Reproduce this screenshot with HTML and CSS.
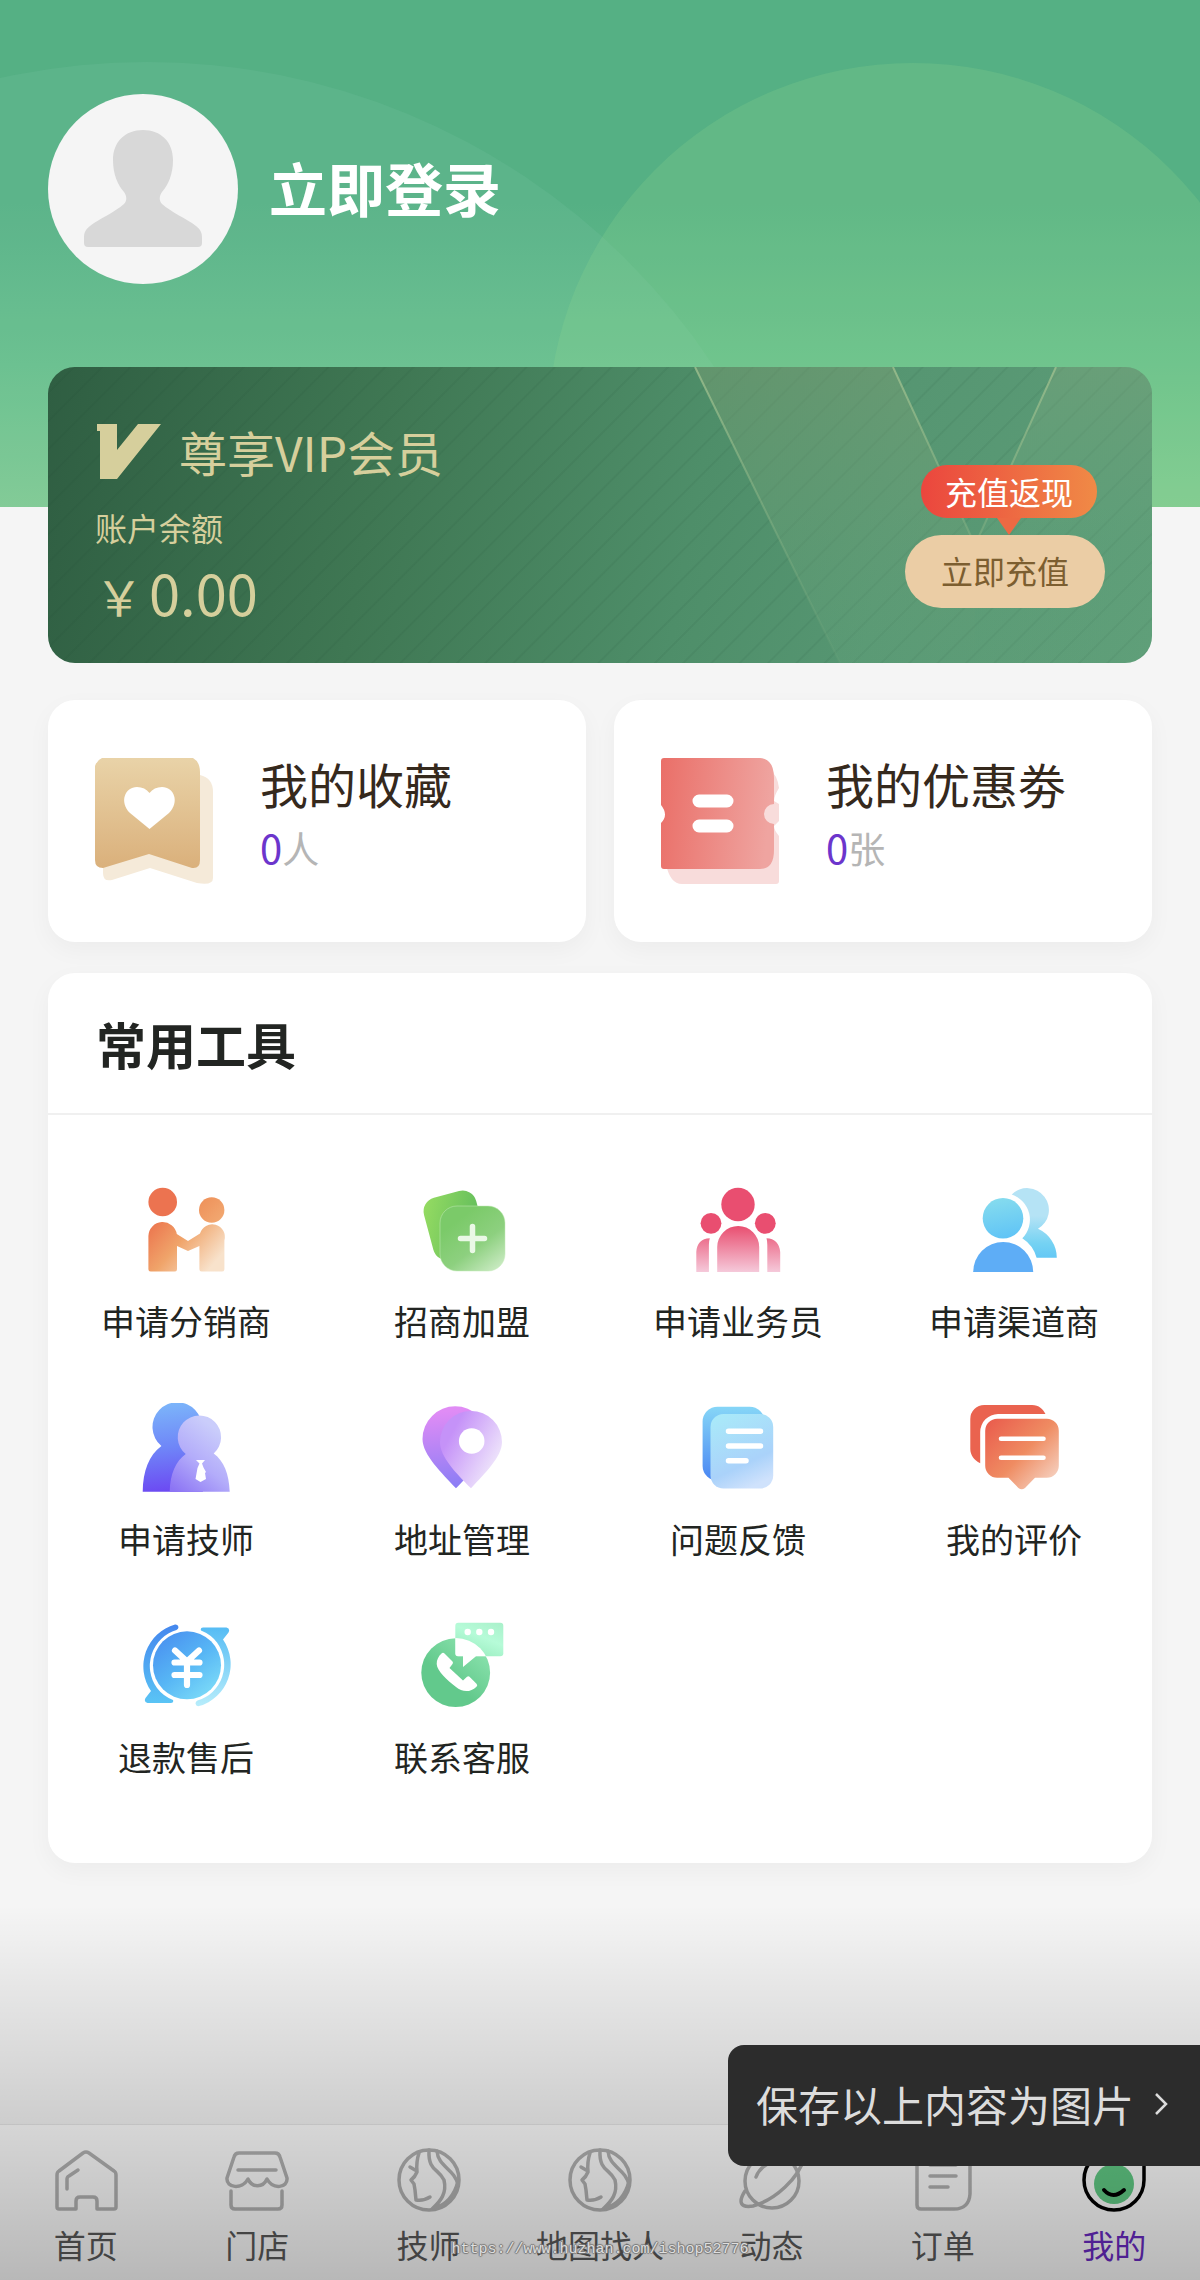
FILE: index.html
```html
<!DOCTYPE html>
<html lang="zh-CN">
<head>
  <meta charset="UTF-8" />
  <meta name="viewport" content="width=device-width, initial-scale=1.0" />
  <title>我的</title>
  <link rel="stylesheet" href="styles.css">
</head>
<body>
  <header class="header">
    <svg class="header-bg" viewBox="0 0 1200 507" preserveAspectRatio="xMidYMin slice" aria-hidden="true">
      <circle cx="147" cy="742" r="680" fill="#a0dcc0" fill-opacity=".1"/>
      <circle cx="913" cy="428" r="365" fill="#96da8f" fill-opacity=".2"/>
    </svg>
    <a class="user" href="#login">
      <svg class="avatar" viewBox="0 0 190 190" aria-hidden="true">
        <circle cx="95" cy="95" r="95" fill="#f5f5f5"/>
        <path fill="#d8d8d8" d="M95 36c18 0 30 12 30 30 0 15-5 25-11 32-3 4-3 9 0 12 9 8 25 15 34 22 5 4 6 7 6 12v5q0 4-4 4H40q-4 0-4-4v-5c0-5 1-8 6-12 9-7 25-14 34-22 3-3 3-8 0-12-6-7-11-17-11-32 0-18 12-30 30-30z"/>
      </svg>
      <span class="user-name">立即登录</span>
    </a>
  </header>

  <main class="content">
    <section class="vip">
      <svg class="vip-bg" viewBox="0 0 1105 296" preserveAspectRatio="xMaxYMin slice" aria-hidden="true">
        <defs>
          <linearGradient id="sheen" x1="0" y1="0" x2="0" y2="1">
            <stop offset="0" stop-color="#7f9f74" stop-opacity=".42"/>
            <stop offset="1" stop-color="#6aa980" stop-opacity=".22"/>
          </linearGradient>
          <linearGradient id="sheen2" x1="0" y1="0" x2="0" y2="1">
            <stop offset="0" stop-color="#83a87e" stop-opacity=".36"/>
            <stop offset=".6" stop-color="#6aa980" stop-opacity=".22"/>
          </linearGradient>
          <linearGradient id="edge" gradientUnits="userSpaceOnUse" x1="0" y1="0" x2="0" y2="296">
            <stop offset="0" stop-color="#9fc08f" stop-opacity=".8"/>
            <stop offset="1" stop-color="#7fae82" stop-opacity=".1"/>
          </linearGradient>
        </defs>
        <path fill="url(#sheen)" d="M648 0h198l82 178v118H793z"/>
        <path fill="url(#sheen2)" d="M1009 0h96v296H928V178z"/>
        <path fill="none" stroke="url(#edge)" stroke-width="2" d="M648 0l145 296M846 0l82 178M1009 0l-81 178"/>
      </svg>
      <div class="vip-info">
        <div class="vip-title">
          <svg class="vip-logo" viewBox="0 0 64 55" aria-hidden="true">
            <path fill="#d6cf9c" d="M0 0h20v26L41 0h23L20 55H3V7H0z"/>
          </svg>
          <span>尊享VIP会员</span>
        </div>
        <div class="vip-label">账户余额</div>
        <div class="vip-amount"><small>￥</small>0.00</div>
      </div>
      <div class="vip-action">
        <span class="vip-tag">充值返现</span>
        <button type="button" class="vip-btn">立即充值</button>
      </div>
    </section>

    <section class="cards">
      <a class="card" href="#favorites">
        <svg class="card-icon" viewBox="0 0 118 126" aria-hidden="true">
          <defs>
            <linearGradient id="fav" x1="0" y1="0" x2="0" y2="1">
              <stop offset="0" stop-color="#e9d3a8"/>
              <stop offset="1" stop-color="#dab07b"/>
            </linearGradient>
          </defs>
          <path fill="#f5ead9" d="M8 24V115q0 9 9 7l38-12 47 15q16 3 16-5V34q0-14-13-17H16z"/>
          <path fill="url(#fav)" d="M7 0H98q7 4 7 14v88q0 9-8 8L54 96 8 110q-8 0-8-8V8q2-6 7-8z"/>
          <path fill="#fff" d="M54.500 71L35 55C24 44 30 29 42 29q8 0 12.500 6Q59 29 67 29c12 0 18 15 7 26z"/>
        </svg>
        <div class="card-text">
          <div class="card-title">我的收藏</div>
          <div class="card-count"><b>0</b>人</div>
        </div>
      </a>
      <a class="card" href="#coupons">
        <svg class="card-icon" viewBox="0 0 118 126" aria-hidden="true">
          <defs>
            <linearGradient id="coupon" x1="0" y1="0" x2="1" y2=".1">
              <stop offset="0" stop-color="#ea6f68"/>
              <stop offset="1" stop-color="#efa4a0"/>
            </linearGradient>
          </defs>
          <path fill="#f8dcdb" d="M5 106q4 20 16 20h94q3 0 3-3V78q-5-6-5-10l5-5V46l-5-3q0-5 5-13-2-14-8-16L60 20z"/>
          <path fill="url(#coupon)" d="M3 0h96q14 1 14 20v26a10 10 0 0 0 0 20v26q0 19-14 19H3q-3 0-3-3V65q8-8 0-18V3q0-3 3-3z"/>
          <path stroke="#fff" stroke-width="13" stroke-linecap="round" d="M38 43h28M38 68h28"/>
        </svg>
        <div class="card-text">
          <div class="card-title">我的优惠劵</div>
          <div class="card-count"><b>0</b>张</div>
        </div>
      </a>
    </section>

    <section class="tools">
      <h2 class="tools-title">常用工具</h2>
      <nav class="tools-grid">
        <a class="tool" href="#distributor">
          <svg viewBox="0 0 90 90" aria-hidden="true">
            <defs>
              <linearGradient id="t1" gradientUnits="userSpaceOnUse" x1="15" y1="35" x2="70" y2="82">
                <stop offset="0" stop-color="#ec7850"/>
                <stop offset=".45" stop-color="#f0a46a"/>
                <stop offset="1" stop-color="#f8e2cb"/>
              </linearGradient>
              <linearGradient id="t1h" x1="0" y1="0" x2="1" y2="1">
                <stop offset="0" stop-color="#ee8f58"/>
                <stop offset="1" stop-color="#f2ab74"/>
              </linearGradient>
            </defs>
            <circle cx="21.700" cy="17" r="14.300" fill="#ec7350"/>
            <circle cx="70.700" cy="25" r="12.700" fill="url(#t1h)"/>
            <path fill="url(#t1)" d="M7.400 84V51a14.300 14.300 0 0 1 28.400-2L47 56l12-7.500a12.500 12.500 0 0 1 24.400 7V84q0 2.500-2.500 2.500H61q-2.600 0-2.600-2.500V61L47 66 36 61v23q0 2.500-2.500 2.500H10q-2.600 0-2.600-2.500z"/>
          </svg>
          <span>申请分销商</span>
        </a>
        <a class="tool" href="#join">
          <svg viewBox="0 0 90 90" aria-hidden="true">
            <defs>
              <linearGradient id="t2a" x1="0" y1="0" x2="1" y2=".6">
                <stop offset="0" stop-color="#98dd62"/>
                <stop offset="1" stop-color="#5fbb5c"/>
              </linearGradient>
              <linearGradient id="t2b" x1=".3" y1=".2" x2=".9" y2="1">
                <stop offset="0" stop-color="#7bca69"/>
                <stop offset=".5" stop-color="#8dd07f"/>
                <stop offset="1" stop-color="#cdecc6"/>
              </linearGradient>
            </defs>
            <rect x="11" y="8" width="54" height="64" rx="14" fill="url(#t2a)" transform="rotate(-15 39 41)"/>
            <rect x="23" y="21" width="65" height="65" rx="17" fill="url(#t2b)" stroke="#c4ebb8" stroke-opacity=".5"/>
            <path stroke="#eaf8e6" stroke-width="5.500" stroke-linecap="round" d="M55.500 41.500v24M43.500 53.500h24"/>
          </svg>
          <span>招商加盟</span>
        </a>
        <a class="tool" href="#salesman">
          <svg viewBox="0 0 90 90" aria-hidden="true">
            <defs>
              <linearGradient id="t3" gradientUnits="userSpaceOnUse" x1="0" y1="42" x2="0" y2="87">
                <stop offset="0" stop-color="#e95172"/>
                <stop offset="1" stop-color="#f5c9da"/>
              </linearGradient>
            </defs>
            <g fill="#e94e70">
              <circle cx="45" cy="19.500" r="16.700"/>
              <circle cx="18" cy="38.300" r="10.400"/>
              <circle cx="72.300" cy="38.300" r="10.400"/>
            </g>
            <path fill="url(#t3)" d="M24.200 87V62a21 21 0 0 1 42 0v25zM16.800 53.300Q15.900 56 15.900 60v27H3.300V67Q4 54 16.800 53.300zM73.500 53.300Q74.300 56 74.300 60v27h12.900V67Q86 54 73.500 53.300z"/>
          </svg>
          <span>申请业务员</span>
        </a>
        <a class="tool" href="#channel">
          <svg viewBox="0 0 90 90" aria-hidden="true">
            <defs>
              <linearGradient id="t4a" x1=".3" y1="0" x2=".5" y2="1">
                <stop offset="0" stop-color="#86dcee"/>
                <stop offset="1" stop-color="#60c4f6"/>
              </linearGradient>
              <linearGradient id="t4b" x1="0" y1="0" x2="0" y2="1">
                <stop offset="0" stop-color="#b5e3f5"/>
                <stop offset=".4" stop-color="#b5e3f5"/>
                <stop offset=".8" stop-color="#74d2f3"/>
                <stop offset="1" stop-color="#64c8f5"/>
              </linearGradient>
            </defs>
            <path fill="url(#t4b)" d="M42.700 9.500A21.800 21.800 0 1 1 69 43.800 32 32 0 0 1 87.800 72.700H67.600A34 34 0 0 0 53.300 53.300 26.500 26.500 0 0 0 42.700 9.500z"/>
            <circle cx="34" cy="33.300" r="20.300" fill="url(#t4a)"/>
            <path fill="#5eadf6" d="M4.200 87a30 30 0 0 1 60 0z"/>
          </svg>
          <span>申请渠道商</span>
        </a>
        <a class="tool" href="#technician">
          <svg viewBox="0 0 90 90" aria-hidden="true">
            <defs>
              <linearGradient id="t5a" gradientUnits="userSpaceOnUse" x1="20" y1="0" x2="30" y2="89">
                <stop offset="0" stop-color="#7cb6fa"/>
                <stop offset=".5" stop-color="#6f86f8"/>
                <stop offset="1" stop-color="#6c48f2"/>
              </linearGradient>
              <linearGradient id="t5b" gradientUnits="userSpaceOnUse" x1="80" y1="30" x2="35" y2="89">
                <stop offset="0" stop-color="#cacdfb"/>
                <stop offset=".5" stop-color="#b3acfa"/>
                <stop offset="1" stop-color="#8c74f4"/>
              </linearGradient>
            </defs>
            <path fill="url(#t5a)" d="M1.700 88.700C2 68 8 52 20.400 43A24.700 24.700 0 1 1 52 43l10 45.700z"/>
            <path fill="url(#t5b)" d="M28.700 88.700C29 71 35 58 44.700 51A21.700 21.700 0 1 1 72.700 50.500C83 58 88 71 88.700 88.700z"/>
            <path fill="#fff" d="M55 57h9l-3 3.500 1.500 4 2.500 4.500-1 1 1 6-5.500 3-5-3 2-11 2-4.500z"/>
          </svg>
          <span>申请技师</span>
        </a>
        <a class="tool" href="#address">
          <svg viewBox="0 0 90 90" aria-hidden="true">
            <defs>
              <linearGradient id="t6a" gradientUnits="userSpaceOnUse" x1="30" y1="8" x2="38" y2="85">
                <stop offset="0" stop-color="#e08cf5"/>
                <stop offset="1" stop-color="#8a7df5"/>
              </linearGradient>
              <linearGradient id="t6b" gradientUnits="userSpaceOnUse" x1="32" y1="35" x2="78" y2="60">
                <stop offset="0" stop-color="#c592f8"/>
                <stop offset="1" stop-color="#ede2fb"/>
              </linearGradient>
            </defs>
            <path fill="url(#t6a)" d="M39 85.300C25 70 5.500 52 5.500 36a32.700 32.700 0 0 1 65.400 0c0 16-17 34-31.900 49.300z"/>
            <path fill="url(#t6b)" d="M54 85.300C39 70 23 54 23 39a31 31 0 0 1 62 0c0 15-17 31-31 46.300z"/>
            <circle cx="54.700" cy="38" r="12.800" fill="#fff"/>
          </svg>
          <span>地址管理</span>
        </a>
        <a class="tool" href="#feedback">
          <svg viewBox="0 0 90 90" aria-hidden="true">
            <defs>
              <linearGradient id="t7a" x1="0" y1="0" x2="0" y2="1">
                <stop offset="0" stop-color="#86d6f7"/>
                <stop offset="1" stop-color="#4a86f3"/>
              </linearGradient>
              <linearGradient id="t7b" x1=".2" y1="0" x2=".6" y2="1">
                <stop offset="0" stop-color="#a9e9f9"/>
                <stop offset=".7" stop-color="#aad2fa"/>
                <stop offset="1" stop-color="#cfe2fc"/>
              </linearGradient>
            </defs>
            <rect x="9.600" y="3.700" width="62" height="74" rx="15" fill="url(#t7a)"/>
            <rect x="17.500" y="11" width="62.700" height="74.500" rx="13" fill="url(#t7b)"/>
            <path stroke="#fff" stroke-width="5.500" stroke-linecap="round" d="M35.500 28.300h32M35.500 43h32M35.500 57.700h17.500"/>
          </svg>
          <span>问题反馈</span>
        </a>
        <a class="tool" href="#reviews">
          <svg viewBox="0 0 90 90" aria-hidden="true">
            <defs>
              <linearGradient id="t8" gradientUnits="userSpaceOnUse" x1="20" y1="20" x2="80" y2="78">
                <stop offset="0" stop-color="#ea5f4e"/>
                <stop offset=".55" stop-color="#ef8c62"/>
                <stop offset="1" stop-color="#f5cbb8"/>
              </linearGradient>
            </defs>
            <path fill="#ea634f" d="M11.200 60.300C5 57 1.300 52 1.300 46V16A14 14 0 0 1 15.300 2H63c7 0 11 4 13.500 9H29a18 18 0 0 0-17.800 18z"/>
            <path fill="url(#t8)" d="M28.200 15.700h49.600a12 12 0 0 1 12 12v35a12 12 0 0 1-12 12H66L56 85q-3.300 2.600-6.600 0L39.500 74.700H28.200a12 12 0 0 1-12-12v-35a12 12 0 0 1 12-12z"/>
            <path stroke="#fff" stroke-width="4.600" stroke-linecap="round" d="M32 35.700h42.500M32 54.700h42.500"/>
          </svg>
          <span>我的评价</span>
        </a>
        <a class="tool" href="#refund">
          <svg viewBox="0 0 90 90" aria-hidden="true">
            <defs>
              <linearGradient id="t9a" x1=".1" y1=".1" x2=".8" y2="1">
                <stop offset="0" stop-color="#4a92f0"/>
                <stop offset=".5" stop-color="#57b6f5"/>
                <stop offset="1" stop-color="#7ddcf8"/>
              </linearGradient>
              <linearGradient id="t9b" gradientUnits="userSpaceOnUse" x1="0" y1="5" x2="0" y2="82">
                <stop offset="0" stop-color="#4588ee"/>
                <stop offset="1" stop-color="#5ac4f5"/>
              </linearGradient>
              <linearGradient id="t9c" gradientUnits="userSpaceOnUse" x1="0" y1="5" x2="0" y2="82">
                <stop offset="0" stop-color="#b5ecfb"/>
                <stop offset="1" stop-color="#56bcf4"/>
              </linearGradient>
            </defs>
            <circle cx="46" cy="44.300" r="34" fill="url(#t9a)"/>
            <path fill="url(#t9b)" d="M34 3.500q3-.5 3.500 2.500 0 2-2 3A37.500 37.500 0 0 0 16 67Q22 75 32 79q1 3-2 3H6.500q-4-1-2-5L10 70A43.500 43.500 0 0 1 34 3.500z"/>
            <path fill="url(#t9c)" transform="rotate(180 46 44.300)" d="M34 3.500q3-.5 3.500 2.500 0 2-2 3A37.500 37.500 0 0 0 16 67Q22 75 32 79q1 3-2 3H6.500q-4-1-2-5L10 70A43.500 43.500 0 0 1 34 3.500z"/>
            <path fill="none" stroke="#fff" stroke-width="6.200" stroke-linecap="round" d="M34 29.500l12 11 12-11M33.500 41.500h25M33.500 54h25M46 41v23"/>
          </svg>
          <span>退款售后</span>
        </a>
        <a class="tool" href="#service">
          <svg viewBox="0 0 90 90" aria-hidden="true">
            <defs>
              <linearGradient id="t10" x1="1" y1="0" x2=".4" y2="1">
                <stop offset="0" stop-color="#a9f0ca"/>
                <stop offset=".5" stop-color="#b6fbd8"/>
                <stop offset="1" stop-color="#9bedc0"/>
              </linearGradient>
              <linearGradient id="t10b" x1="1" y1=".1" x2=".5" y2=".7">
                <stop offset="0" stop-color="#90e6b2"/>
                <stop offset="1" stop-color="#62c98c"/>
              </linearGradient>
              <clipPath id="t10c"><circle cx="38.700" cy="51.700" r="34.600"/></clipPath>
            </defs>
            <circle cx="38.700" cy="51.700" r="34.400" fill="url(#t10b)"/>
            <rect x="38.300" y="1.700" width="48" height="33.500" rx="3" fill="url(#t10)"/>
            <path clip-path="url(#t10c)" fill="#fff" d="M38.300 1.700h48v33.500H59L46 46V35.200h-5q-2.700 0-2.700-3z"/>
            <g fill="#fff">
              <circle cx="50.700" cy="11" r="3.200"/>
              <circle cx="62.300" cy="11" r="3.200"/>
              <circle cx="74" cy="11" r="3.200"/>
              <path d="M24.500 32.500q1.500-1.500 3 0l8 8q1 1 0 2.500l-3 4L46 59.500l4-3.800q1.500-1 2.500 0l7 7q1.500 1.500 0 3C53 72 45 71 39 66 30 59 20 50 19.700 43c0-4 1.500-7.500 4.800-10.500z"/>
            </g>
          </svg>
          <span>联系客服</span>
        </a>
      </nav>
    </section>
  </main>

  <nav class="tabbar">
    <a class="tab" href="#home">
      <svg viewBox="0 0 64 64" aria-hidden="true">
        <path d="M29 5q3-2 6 0l25 18q2 1 2 4v32q0 2-2 2H43V53q0-4-4-4H26q-4 0-4 4v8H5q-2 0-2-2V27q0-3 2-4z"/>
        <path d="M24 22l-9 6q-2 1-2 3v10"/>
      </svg>
      <span>首页</span>
    </a>
    <a class="tab" href="#shop">
      <svg viewBox="0 0 64 64" aria-hidden="true">
        <path d="M14 5h36q4 0 5 4l7 21c1 10-14 12-20 1-4 9-15 9-19 0C17 42 1 40 2 30L9 9q1-4 5-4zM13 22h38M6 43v14q0 4 4 4h43q4 0 4-4V43"/>
      </svg>
      <span>门店</span>
    </a>
    <a class="tab" href="#staff">
      <svg viewBox="0 0 64 64" aria-hidden="true">
        <circle cx="32" cy="32" r="30"/>
        <path d="M22 5q-3 9-2 19-2 5-6 8l3 4 1 6 1 10q8 1 14-3M13 19l5 3M32 2c-1 21 9 18 15 30 3 13-3 21-12 29M40 3c1 16 18 18 21 34M36 61q20-6 25-28"/>
      </svg>
      <span>技师</span>
    </a>
    <a class="tab" href="#map">
      <svg viewBox="0 0 64 64" aria-hidden="true">
        <circle cx="32" cy="32" r="30"/>
        <path d="M22 5q-3 9-2 19-2 5-6 8l3 4 1 6 1 10q8 1 14-3M13 19l5 3M32 2c-1 21 9 18 15 30 3 13-3 21-12 29M40 3c1 16 18 18 21 34M36 61q20-6 25-28"/>
      </svg>
      <span>地图找人</span>
    </a>
    <a class="tab" href="#feed">
      <svg viewBox="0 0 64 64" aria-hidden="true">
        <circle cx="33" cy="33" r="27"/>
        <path d="M6 43C-1 54 1 60 14 58 36 52 60 30 65 10M17 29q3-8 10-12"/>
      </svg>
      <span>动态</span>
    </a>
    <a class="tab" href="#orders">
      <svg viewBox="0 0 64 64" aria-hidden="true">
        <path d="M10 4h45q4 0 4 4v38q-1 15-16 15H10q-4 0-4-4V8q0-4 4-4zM19 17h26M19 28h26M19 39h18"/>
      </svg>
      <span>订单</span>
    </a>
    <a class="tab active" href="#mine">
      <svg viewBox="0 0 64 64" aria-hidden="true">
        <path stroke="#000" d="M32 2h27q3 0 3 3v27a30 30 0 0 1-60 0A30 30 0 0 1 32 2z"/>
        <circle class="face" cx="32" cy="36" r="20"/>
        <path stroke="#000" stroke-width="4" d="M22 42q9 10 20 0"/>
      </svg>
      <span>我的</span>
    </a>
  </nav>

  <div class="shade"></div>
  <div class="watermark">https://www.huzhan.com/ishop52776</div>
  <button type="button" class="save-tip">
    保存以上内容为图片
    <svg viewBox="0 0 14 24" aria-hidden="true"><path d="M2 2l10 10L2 22"/></svg>
  </button>
</body>
</html>
```
FILE: styles.css
```css
:root {
  --page-bg: #f5f5f5;
  --gold: #d6cf9c;
  --purple: #6c35cc;
  --radius: 27px;
  --side: 48px;
}

* {
  box-sizing: border-box;
}

body {
  margin: 0;
  min-height: 100vh;
  display: flex;
  flex-direction: column;
  position: relative;
  background: var(--page-bg);
  color: #222522;
  font-family: "Noto Sans CJK SC", "Noto Sans", sans-serif;
}

a {
  color: inherit;
  text-decoration: none;
}

button {
  border: 0;
  font: inherit;
  cursor: pointer;
}

/* header */
.header {
  position: relative;
  padding: 94px var(--side) 223px;
  background: linear-gradient(#55b084 0%, #55b084 40%, #67bf8c 72%, #80ca92 100%);
}

.header-bg {
  position: absolute;
  inset: 0;
  width: 100%;
  height: 100%;
}

.user {
  position: relative;
  display: flex;
  align-items: center;
  gap: 31px;
}

.avatar {
  width: 190px;
  height: 190px;
}

.user-name {
  padding-bottom: 4px;
  color: #fff;
  font-size: 58px;
  font-weight: bold;
}

.content {
  position: relative;
  margin-top: -140px;
  padding: 0 var(--side) 40px;
}

/* vip card */
.vip {
  position: relative;
  display: flex;
  justify-content: space-between;
  padding: 54px 47px 39px;
  border-radius: var(--radius);
  overflow: hidden;
  color: var(--gold);
  background:
    repeating-linear-gradient(135deg, transparent 0, transparent 17px, rgba(20, 60, 40, 0.07) 18px, rgba(20, 60, 40, 0.07) 19px, transparent 20px),
    linear-gradient(100deg, #2f5e42 0%, #3f7753 30%, #4e8e69 58%, #569672 75%, #5c9c77 100%);
}

.vip-bg {
  position: absolute;
  inset: 0;
  width: 100%;
  height: 100%;
}

.vip-info,
.vip-action {
  position: relative;
}

.vip-title {
  display: flex;
  align-items: center;
  gap: 18px;
  height: 60px;
  padding-left: 2px;
  font-size: 48px;
}

.vip-logo {
  width: 64px;
  height: 55px;
}

.vip-label {
  margin-top: 22px;
  font-size: 32px;
  line-height: 48px;
}

.vip-amount {
  margin-top: 9px;
  font-size: 56px;
  line-height: 64px;
}

.vip-amount small {
  margin-right: 6px;
  font-size: 48px;
  line-height: 1;
}

.vip-action {
  display: flex;
  flex-direction: column;
  align-items: flex-end;
  padding-top: 44px;
  font-size: 32px;
}

.vip-tag {
  position: relative;
  margin-right: 8px;
  padding: 0 24px;
  line-height: 53px;
  border-radius: 26px;
  color: #fff;
  background: linear-gradient(90deg, #eb463e, #f08a46);
}

.vip-tag::after {
  content: "";
  position: absolute;
  left: 50%;
  top: 100%;
  transform: translateX(-50%);
  border: 12px solid transparent;
  border-top: 17px solid #ed6943;
  border-bottom: 0;
}

.vip-btn {
  margin-top: 17px;
  padding: 0 36px 2px;
  line-height: 71px;
  border-radius: 37px;
  color: #7c5e30;
  background: #ebcda5;
}

/* favorites and coupons */
.cards {
  display: grid;
  grid-template-columns: 1fr 1fr;
  gap: 28px;
  margin-top: 37px;
}

.card {
  display: flex;
  align-items: flex-start;
  gap: 47px;
  padding: 51px 47px 58px;
  border-radius: var(--radius);
  background: #fff;
  box-shadow: 0 8px 24px rgba(0, 0, 0, 0.04);
}

.card-icon {
  width: 118px;
  height: 126px;
  margin-top: 7px;
}

.card-title {
  color: #35291d;
  font-size: 48px;
  line-height: 64px;
}

.card-count {
  color: #b5b5b5;
  font-size: 37px;
  line-height: 66px;
}

.card-count b {
  color: var(--purple);
  font-size: 40px;
  font-weight: normal;
  line-height: 1;
}

/* tools */
.tools {
  margin-top: 31px;
  border-radius: var(--radius);
  background: #fff;
  box-shadow: 0 8px 24px rgba(0, 0, 0, 0.04);
}

.tools-title {
  margin: 0;
  padding: 0 48px;
  font-size: 50px;
  line-height: 140px;
  border-bottom: 2px solid #f0f0f0;
}

.tools-grid {
  display: grid;
  grid-template-columns: repeat(4, 1fr);
  row-gap: 60px;
  padding: 70px 0 84px;
}

.tool {
  display: flex;
  flex-direction: column;
  align-items: center;
  gap: 24px;
  font-size: 34px;
  line-height: 44px;
}

.tool svg {
  width: 90px;
  height: 90px;
}

/* bottom tabs */
.tabbar {
  display: flex;
  margin-top: auto;
  padding: 23px 0 16px;
  border-top: 1px solid #e8e8e8;
  background: #fff;
}

.tab {
  flex: 1 1 0;
  display: flex;
  flex-direction: column;
  align-items: center;
  gap: 12px;
  color: #5a5a5a;
  font-size: 32px;
  line-height: 40px;
  white-space: nowrap;
}

.tab svg {
  width: 64px;
  height: 64px;
  fill: none;
  stroke: #b4b4b4;
  stroke-width: 3.500;
  stroke-linecap: round;
  stroke-linejoin: round;
  overflow: visible;
}

.tab.active {
  color: #6a2bc4;
}

.tab .face {
  fill: #62cc86;
  stroke: none;
}

.shade {
  position: absolute;
  left: 0;
  right: 0;
  bottom: 0;
  height: 375px;
  background: linear-gradient(rgba(0, 0, 0, 0), rgba(0, 0, 0, 0.28));
  pointer-events: none;
}

.watermark {
  position: absolute;
  left: 0;
  right: 0;
  bottom: 18px;
  text-align: center;
  color: #dedede;
  font-family: "Liberation Mono", monospace;
  font-size: 15px;
  line-height: 24px;
  text-shadow: 1px 0 1px #777, -1px 0 1px #777, 0 1px 1px #777, 0 -1px 1px #777;
  pointer-events: none;
}

.save-tip {
  position: absolute;
  right: 0;
  bottom: 114px;
  display: flex;
  align-items: center;
  gap: 20px;
  padding: 0 32px 4px 28px;
  border-radius: 16px 0 0 16px;
  color: #dcdcdc;
  background: #2c2c2c;
  font-size: 42px;
  line-height: 117px;
}

.save-tip svg {
  width: 14px;
  height: 24px;
  fill: none;
  stroke: #dcdcdc;
  stroke-width: 2.500;
}
```
